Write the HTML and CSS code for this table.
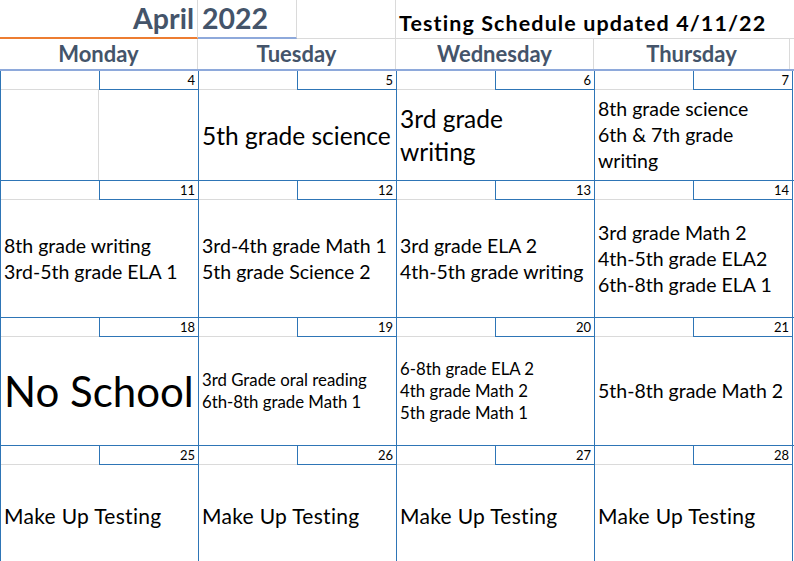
FILE: index.html
```html
<!DOCTYPE html>
<html>
<head>
<meta charset="utf-8">
<link rel="stylesheet" href="styles.css">
</head>
<body>
<div class="sheet">
  <div class="title-row">
    <div class="tcell t-april">April</div>
    <div class="tcell t-year">2022</div>
    <div class="tcell t-blank"></div>
    <div class="tcell t-note">Testing Schedule updated 4/11/22</div>
  </div>
  <div class="days-row">
    <div class="dname">Monday</div>
    <div class="dname">Tuesday</div>
    <div class="dname">Wednesday</div>
    <div class="dname">Thursday</div>
  </div>

  <div class="week w1">
    <div class="day">
      <div class="num-row"><div class="num-gap"></div><div class="num">4</div></div>
      <div class="content empty"><div class="grid-half"></div></div>
    </div>
    <div class="day">
      <div class="num-row"><div class="num-gap"></div><div class="num">5</div></div>
      <div class="content fs-l">5th grade science</div>
    </div>
    <div class="day">
      <div class="num-row"><div class="num-gap"></div><div class="num">6</div></div>
      <div class="content fs-l">3rd grade<br>writing</div>
    </div>
    <div class="day">
      <div class="num-row"><div class="num-gap"></div><div class="num">7</div></div>
      <div class="content fs-m">8th grade science<br>6th &amp; 7th grade<br>writing</div>
    </div>
  </div>

  <div class="week w2">
    <div class="day">
      <div class="num-row"><div class="num-gap"></div><div class="num">11</div></div>
      <div class="content fs-m">8th grade writing<br>3rd-5th grade ELA 1</div>
    </div>
    <div class="day">
      <div class="num-row"><div class="num-gap"></div><div class="num">12</div></div>
      <div class="content fs-m">3rd-4th grade Math 1<br>5th grade Science 2</div>
    </div>
    <div class="day">
      <div class="num-row"><div class="num-gap"></div><div class="num">13</div></div>
      <div class="content fs-m">3rd grade ELA 2<br>4th-5th grade writing</div>
    </div>
    <div class="day">
      <div class="num-row"><div class="num-gap"></div><div class="num">14</div></div>
      <div class="content fs-m">3rd grade Math 2<br>4th-5th grade ELA2<br>6th-8th grade ELA 1</div>
    </div>
  </div>

  <div class="week w3">
    <div class="day">
      <div class="num-row"><div class="num-gap"></div><div class="num">18</div></div>
      <div class="content fs-xl">No School</div>
    </div>
    <div class="day">
      <div class="num-row"><div class="num-gap"></div><div class="num">19</div></div>
      <div class="content fs-s">3rd Grade oral reading<br>6th-8th grade Math 1</div>
    </div>
    <div class="day">
      <div class="num-row"><div class="num-gap"></div><div class="num">20</div></div>
      <div class="content fs-s">6-8th grade ELA 2<br>4th grade Math 2<br>5th grade Math 1</div>
    </div>
    <div class="day">
      <div class="num-row"><div class="num-gap"></div><div class="num">21</div></div>
      <div class="content fs-m">5th-8th grade Math 2</div>
    </div>
  </div>

  <div class="week w4">
    <div class="day">
      <div class="num-row"><div class="num-gap"></div><div class="num">25</div></div>
      <div class="content fs-mu">Make Up Testing</div>
    </div>
    <div class="day">
      <div class="num-row"><div class="num-gap"></div><div class="num">26</div></div>
      <div class="content fs-mu">Make Up Testing</div>
    </div>
    <div class="day">
      <div class="num-row"><div class="num-gap"></div><div class="num">27</div></div>
      <div class="content fs-mu">Make Up Testing</div>
    </div>
    <div class="day">
      <div class="num-row"><div class="num-gap"></div><div class="num">28</div></div>
      <div class="content fs-mu">Make Up Testing</div>
    </div>
  </div>
</div>
</body>
</html>
```

FILE: styles.css
```css
html, body {
  margin: 0;
  padding: 0;
  background: #ffffff;
}
body {
  width: 794px;
  height: 561px;
  overflow: hidden;
  font-family: Lato, "Liberation Sans", sans-serif;
  color: #000;
}
.sheet {
  width: 794px;
}

/* title row */
.title-row {
  display: flex;
  height: 39px;
}
.tcell {
  box-sizing: border-box;
  height: 39px;
  border-bottom: 1px solid #dadada;
  border-right: 1px solid #dadada;
  white-space: nowrap;
  display: flex;
}
.t-april {
  width: 198px;
  border-bottom: 2px solid #ED7D31;
  justify-content: flex-end;
  padding-right: 3px;
  padding-top: 1px;
  color: #44546A;
  font-weight: 700;
  font-size: 28.5px;
}
.t-year {
  width: 99px;
  border-bottom: 2px solid #8EA9DB;
  padding-left: 4px;
  padding-top: 1px;
  color: #44546A;
  font-weight: 700;
  font-size: 28.5px;
}
.t-blank {
  width: 99px;
}
.t-note {
  flex: 1;
  border-right: none;
  padding-left: 3px;
  padding-top: 10px;
  font-weight: 700;
  font-size: 21.5px;
  letter-spacing: 1.1px;
  color: #000;
}

/* day names */
.days-row {
  display: flex;
  height: 32px;
  box-sizing: border-box;
  border-bottom: 2px solid #8EA9DB;
}
.dname {
  box-sizing: border-box;
  width: 198px;
  border-right: 1px solid #dadada;
  text-align: center;
  padding-top: 1px;
  font-weight: 700;
  font-size: 22px;
  color: #44546A;
}
.dname:last-child {
  width: 196px;
}

/* weeks */
.week {
  display: flex;
  border-top: 1px solid #2E75B6;
}
.w1 {
  border-top: none;
}
.day {
  box-sizing: border-box;
  width: 198px;
  border-left: 1px solid #2E75B6;
  display: flex;
  flex-direction: column;
}
.day:last-child {
  width: 199px;
  border-right: 1px solid #2E75B6;
}
.num-row {
  display: flex;
  height: 19px;
}
.num-gap {
  box-sizing: border-box;
  width: 98px;
  border-bottom: 1px solid #dadada;
}
.num {
  box-sizing: border-box;
  flex: 1;
  border-left: 1px solid #2E75B6;
  border-bottom: 1px solid #2E75B6;
  text-align: right;
  padding-right: 3px;
  font-size: 13px;
  line-height: 18px;
}
.content {
  display: flex;
  flex-direction: column;
  justify-content: center;
  padding-left: 3px;
  white-space: nowrap;
}
.w1 .content { height: 90px; }
.w2 .content { height: 117px; }
.w3 .content { height: 108px; }
.w4 .content { height: 102px; }

.content.empty {
  padding-left: 0;
  justify-content: stretch;
}
.grid-half {
  box-sizing: border-box;
  width: 98px;
  height: 100%;
  border-right: 1px solid #dadada;
}

.fs-xl { font-size: 42px; line-height: 52px; }
.fs-l  { font-size: 24.5px; line-height: 33px; }
.fs-m  { font-size: 19.5px; line-height: 26px; }
.fs-mu { font-size: 21px; line-height: 26px; letter-spacing: 0.3px; }
.fs-s  { font-size: 16.8px; line-height: 22px; }
```
